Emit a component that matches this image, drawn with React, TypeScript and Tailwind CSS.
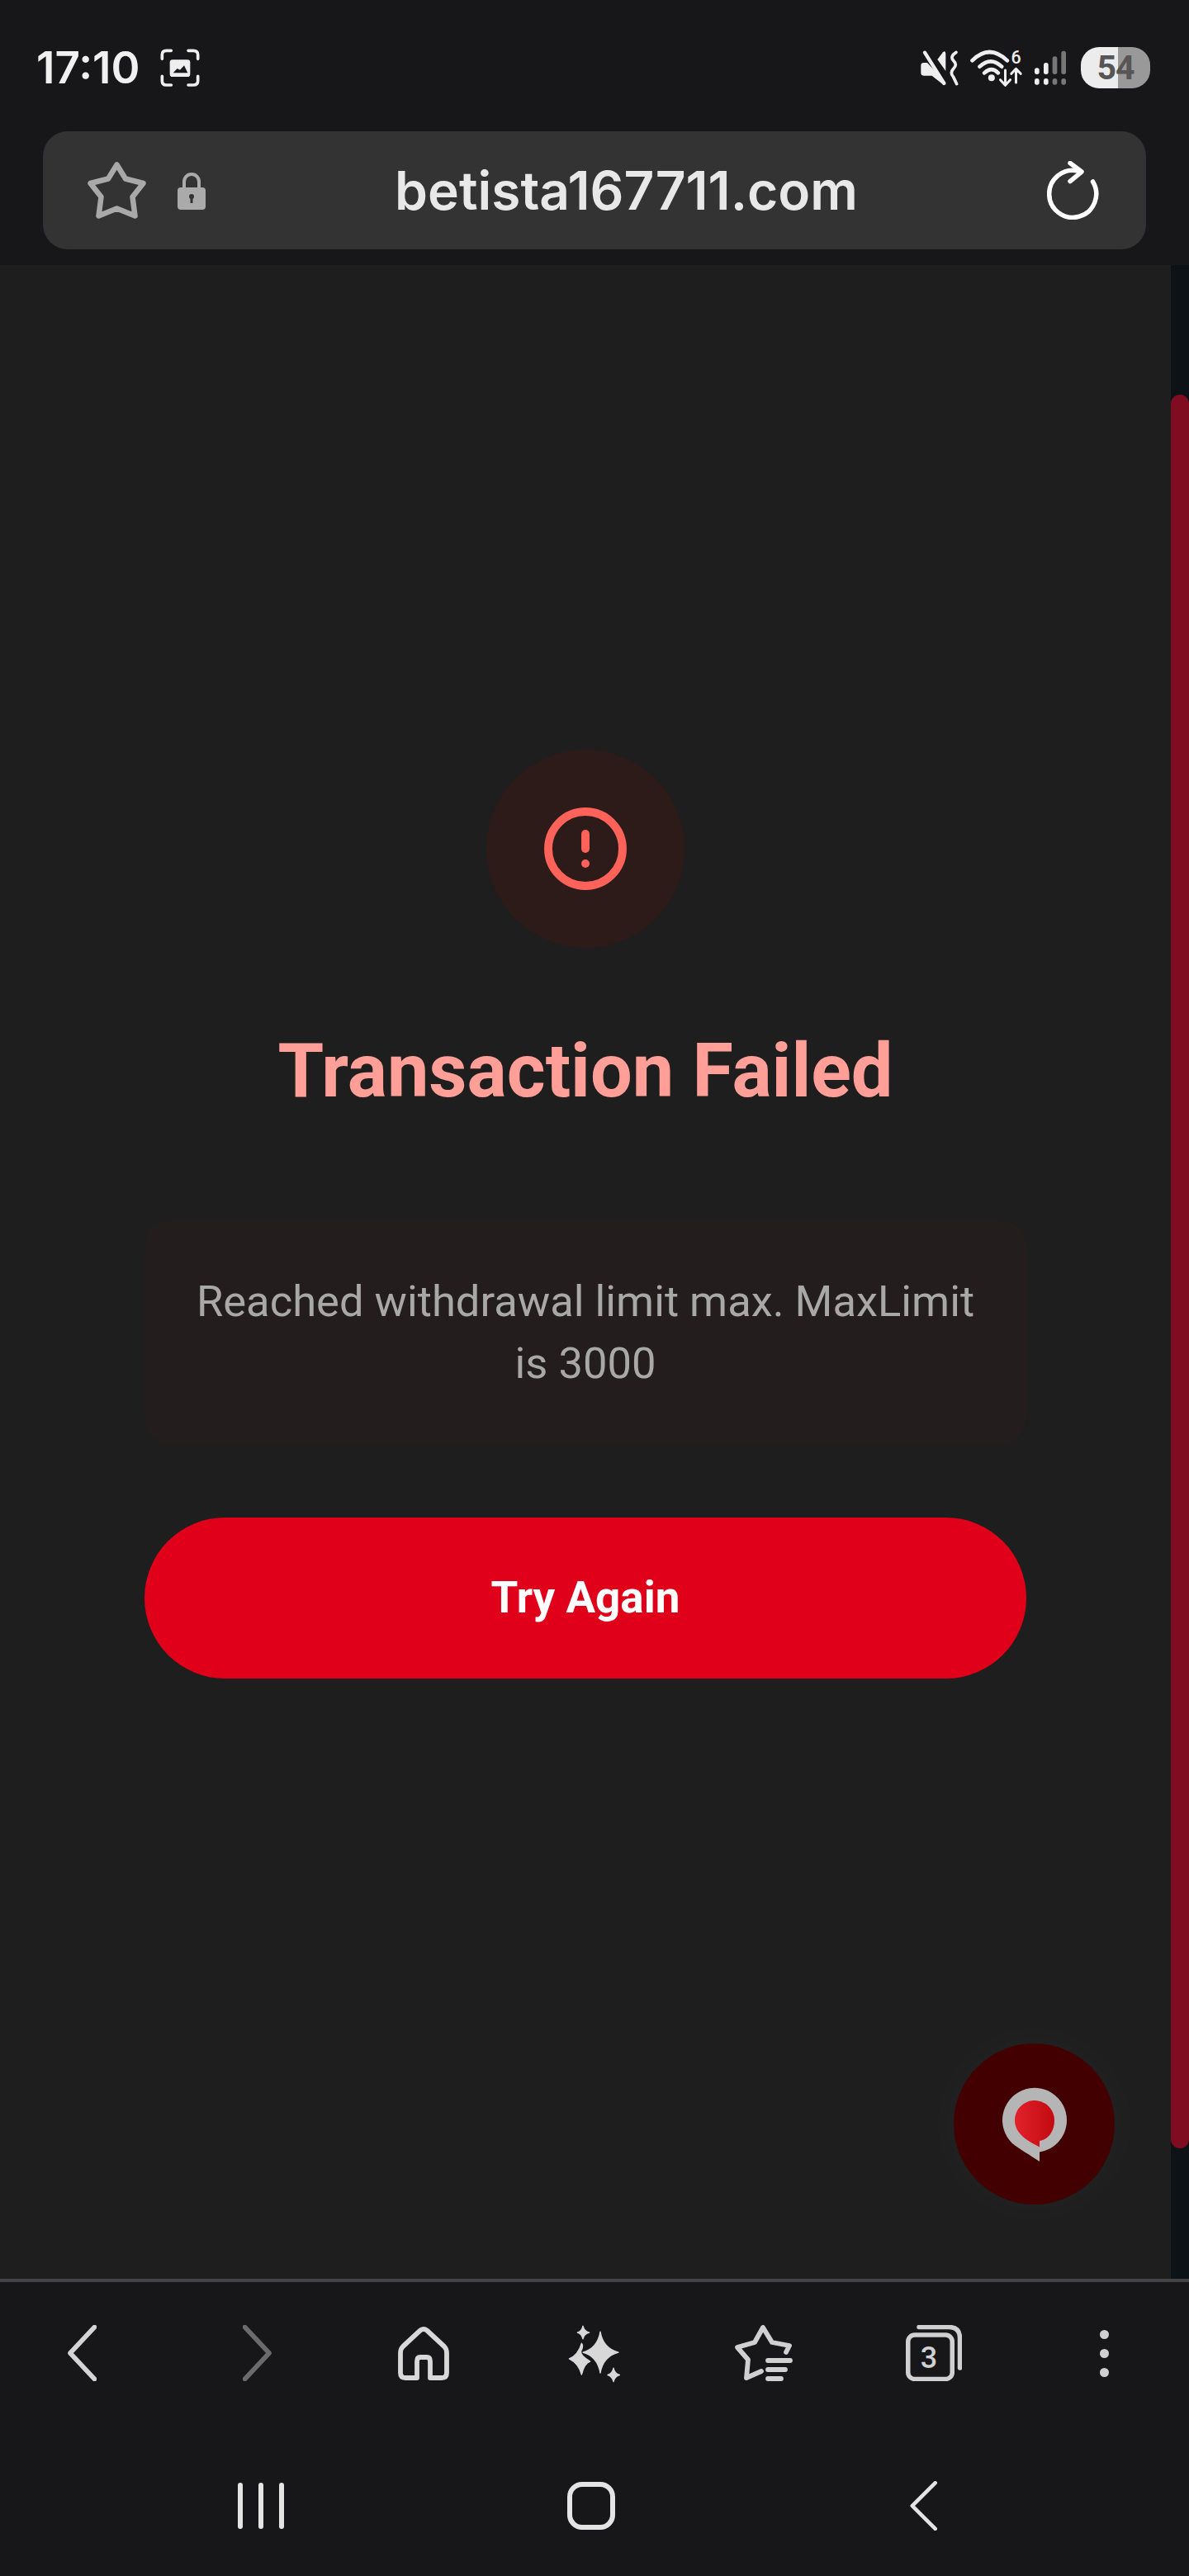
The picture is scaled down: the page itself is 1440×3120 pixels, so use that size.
import { AlertCircle } from "lucide-react";

function ScreenshotIcon() {
  return (
    <svg width="50" height="50" viewBox="35 22 150 150" fill="none" className="ml-[24px]">
      <path d="M45 65V50Q45 35 60 35H78M140 35H158Q175 35 175 50V65M175 128V145Q175 160 158 160H140M78 160H60Q45 160 45 145V128" stroke="#eee" strokeWidth="11" strokeLinecap="round" />
      <rect x="73" y="68" width="74" height="62" rx="10" fill="#eee" />
      <path d="M85 116L100 100L110 105L125 89L138 116Z" fill="#17171a" />
    </svg>
  );
}

function MuteIcon() {
  return (
    <svg width="50" height="45" viewBox="25 30 150 135" fill="none">
      <path d="M32 88Q32 78 42 78H55L122 150V152Q118 162 110 155L72 125H42Q32 125 32 115Z" fill="#eee" />
      <path d="M92 66L112 40Q120 32 122 44V108Z" fill="#eee" />
      <path d="M46 41L116 153" stroke="#eee" strokeWidth="13" strokeLinecap="round" />
      <path d="M160 40Q136 55 150 70Q166 85 150 100Q136 115 150 130Q156 142 162 155" stroke="#eee" strokeWidth="11" strokeLinecap="round" />
    </svg>
  );
}

function WifiIcon() {
  return (
    <svg width="67" height="55" viewBox="205 15 200 165" fill="none" className="ml-[10px]">
      <path d="M218 70Q280 8 345 70M245 92Q285 54 325 92M262 115Q288 90 312 115" stroke="#eee" strokeWidth="14" strokeLinecap="round" />
      <circle cx="288" cy="133" r="12" fill="#eee" />
      <path d="M338 105V158M320 140L338 160L356 140M377 150V100M360 118L377 100L394 118" stroke="#eee" strokeWidth="9" strokeLinecap="round" strokeLinejoin="round" />
      <text x="377" y="80" textAnchor="middle" fontSize="64" fontWeight="500" fill="#eee" fontFamily="Roboto, sans-serif">6</text>
    </svg>
  );
}

function SignalIcon() {
  return (
    <svg width="40" height="44" viewBox="440 30 120 132" fill="none" className="ml-[12px]">
      <rect x="443" y="97" width="17" height="23" rx="8" fill="#eee" />
      <rect x="476" y="78" width="17" height="42" rx="8" fill="#eee" />
      <rect x="508" y="55" width="17" height="65" rx="8" fill="#777" />
      <rect x="540" y="35" width="17" height="85" rx="8" fill="#777" />
      <rect x="443" y="135" width="17" height="23" rx="8" fill="#eee" />
      <rect x="476" y="135" width="17" height="23" rx="8" fill="#eee" />
      <rect x="508" y="135" width="17" height="23" rx="8" fill="#777" />
      <rect x="540" y="135" width="17" height="23" rx="8" fill="#777" />
    </svg>
  );
}

function Battery() {
  return (
    <div className="ml-[17px] flex h-[50px] w-[84px] items-center justify-center overflow-hidden rounded-[22px] bg-[linear-gradient(90deg,#ececec_0,#ececec_45px,#999999_45px,#999999_100%)]">
      <span className="text-[41px] leading-none font-bold tracking-[-1px] text-[#565656] [font-family:Roboto,sans-serif]">54</span>
    </div>
  );
}

function StarOutline() {
  return (
    <svg width="71" height="69" viewBox="0 0 71 69" fill="none">
      <path d="M35.500 3.500L46 20.500L67.500 26L54.500 42.500L57.500 65.500L35.500 56.500L13.500 65.500L16.500 42.500L3.500 26L25 20.500Z" stroke="#a9a9a9" strokeWidth="6.500" strokeLinejoin="round" />
    </svg>
  );
}

function LockIcon() {
  return (
    <svg width="34" height="46" viewBox="0 0 34 46" fill="none" className="ml-[38px]">
      <path d="M8 21V12a9 9 0 0 1 18 0v9" stroke="#aaa" strokeWidth="4" />
      <rect x="0" y="19" width="34" height="27" rx="4" fill="#aaa" />
      <circle cx="17" cy="30" r="3" fill="#333" />
      <rect x="15.5" y="30" width="3" height="8" fill="#333" />
    </svg>
  );
}

function ReloadIcon() {
  return (
    <svg width="63" height="71" viewBox="0 0 63 71" fill="none">
      <path d="M38 12.200A28.500 28.500 0 1 0 55.500 25" stroke="#fff" strokeWidth="5.500" strokeLinecap="round" />
      <path d="M28 2.500L42 13L28 24.500" stroke="#fff" strokeWidth="5.500" strokeLinecap="round" strokeLinejoin="round" />
    </svg>
  );
}

function Chevron({ dir, color, width = 5.6, className }: { dir: "left" | "right"; color: string; width?: number; className?: string }) {
  return (
    <svg width="35" height="68" viewBox="0 0 35 68" fill="none" preserveAspectRatio="none" className={className}>
      <path d={dir === "left" ? "M32.500 2.500L3 34L32.500 65.500" : "M2.500 2.500L32 34L2.500 65.500"} stroke={color} strokeWidth={width} strokeLinecap="round" strokeLinejoin="round" />
    </svg>
  );
}

function HomeIcon() {
  return (
    <svg width="62" height="65" viewBox="0 0 62 65" fill="none" className="ml-[153px]">
      <path d="M3 32Q3 27 6 24L27 4.500Q31 1.500 35 4.500L56 24Q59 27 59 32V56Q59 62 53 62H39V42Q39 37 35 37H27Q23 37 23 42V62H9Q3 62 3 56Z" stroke="#d8d8d8" strokeWidth="5.800" strokeLinejoin="round" />
    </svg>
  );
}

function SparklesIcon() {
  return (
    <svg width="65" height="72" viewBox="50 40 195 215" fill="#d8d8d8" stroke="#d8d8d8" strokeWidth="4" strokeLinejoin="round" className="ml-[143px]">
      <path d="M107 49Q111 68 130 73Q111 78 107 96Q103 78 87 73Q103 68 107 49Z" />
      <path d="M170 70Q180 130 236 145Q180 160 170 220Q160 160 107 145Q160 130 170 70Z" />
      <path d="M102 112Q110 122 100 140Q95 154 133 178Q112 185 102 226Q92 185 57 168Q90 155 102 112Z" />
      <path d="M218 202Q222 222 240 227Q222 232 218 251Q214 232 197 227Q214 222 218 202Z" />
    </svg>
  );
}

function BookmarksIcon() {
  return (
    <svg width="71" height="68" viewBox="0 0 71 68" fill="none" className="ml-[137px]">
      <path d="M63 33L67 25L46 21L35 3L25 21L4 27L17 42L15 64L33 56" stroke="#d0d0d0" strokeWidth="5.800" strokeLinecap="round" strokeLinejoin="round" />
      <path d="M41 43H68M41 54H62M41 65H57" stroke="#d0d0d0" strokeWidth="5.800" strokeLinecap="round" />
    </svg>
  );
}

function TabsIcon() {
  return (
    <svg width="68" height="68" viewBox="0 0 68 68" fill="none" className="ml-[137px]">
      <path d="M16 2.500H52Q65.500 2.500 65.500 16V52" stroke="#d0d0d0" strokeWidth="5.500" strokeLinecap="round" />
      <rect x="2.750" y="12" width="53.500" height="53.500" rx="8" stroke="#d0d0d0" strokeWidth="5.500" />
      <text x="28" y="52" textAnchor="middle" fontSize="36" fontWeight="500" fill="#d0d0d0" fontFamily="Roboto, sans-serif">3</text>
    </svg>
  );
}

function ChatBubble() {
  return (
    <svg width="80" height="90" viewBox="0 0 80 90" fill="none">
      <defs>
        <linearGradient id="bubbleRed" x1="0" x2="1" y1="0" y2="0">
          <stop offset="0" stopColor="#e2222c" />
          <stop offset="1" stopColor="#c20a10" />
        </linearGradient>
      </defs>
      <path d="M46 78.500C64 76 79 60 79 40A39 39 0 1 0 13 68C22 75 34 82 46 90Z" fill="#b5b5b5" />
      <path d="M46 72.500V65C58 63 64 52 64 40A24 24 0 1 0 23 57C29 64 38 68 46 72.500Z" fill="url(#bubbleRed)" />
    </svg>
  );
}

export default function App() {
  return (
    <div className="flex h-[3120px] w-[1440px] flex-col overflow-hidden bg-[#17171a] [font-family:Roboto,sans-serif]">
      <header className="h-[321px] shrink-0">
        <div className="flex h-[159px] items-start justify-between pt-[57px] pr-[47px] pl-[44px]">
          <div className="flex h-[50px] items-center">
            <span className="text-[53px] leading-[50px] font-semibold text-[#f0f0f0] [font-family:Inter,sans-serif]">17:10</span>
            <ScreenshotIcon />
          </div>
          <div className="flex h-[50px] items-center">
            <MuteIcon />
            <WifiIcon />
            <SignalIcon />
            <Battery />
          </div>
        </div>
        <div className="mx-[52px] flex h-[143px] items-center rounded-[30px] bg-[#333333] pr-[57px] pl-[54px]">
          <StarOutline />
          <LockIcon />
          <span className="flex-1 text-center text-[64px] leading-none font-semibold text-[#e8e8e8] [font-family:Inter,sans-serif]">betista167711.com</span>
          <ReloadIcon />
        </div>
      </header>

      <div className="flex h-[2439px] shrink-0">
        <main className="relative w-[1418px] bg-[#1e1e1e] px-[175px] pt-[587px]">
          <div className="mx-auto flex h-[240px] w-[240px] items-center justify-center rounded-full bg-[#2d1b1a]">
            <AlertCircle size={108} color="#ff6259" strokeWidth={2.2} />
          </div>
          <h1 className="mt-[98px] text-center text-[90px] leading-[104px] font-bold text-[#ff9f97]">Transaction Failed</h1>
          <div className="mt-[128px] flex h-[272px] items-center justify-center rounded-[32px] bg-[#231d1d] px-[60px] text-center text-[52.500px] leading-[75px] text-[#a8a8a8]">
            Reached withdrawal limit max. MaxLimit is 3000
          </div>
          <button type="button" className="mt-[88px] h-[195px] w-full rounded-full bg-[#e0001a] text-[53px] font-bold text-white">
            Try Again
          </button>
          <div className="absolute top-[2154px] left-[1155px] flex h-[195px] w-[195px] items-center justify-center rounded-full bg-[#420000] shadow-[0_0_70px_rgba(255,255,255,0.03)]">
            <ChatBubble />
          </div>
        </main>
        <div className="w-[22px] bg-[#0d1216] pt-[157px]">
          <div className="h-[2124px] rounded-full bg-[#7f0c20]" />
        </div>
      </div>

      <footer className="flex-1 border-t-4 border-[#444444]">
        <div className="flex h-[243px] pt-[52px] pl-[82px]">
          <div className="flex h-[68px] items-center">
            <Chevron dir="left" color="#d4d4d4" />
            <Chevron dir="right" color="#6b6b6b" className="ml-[177px]" />
            <HomeIcon />
            <SparklesIcon />
            <BookmarksIcon />
            <TabsIcon />
            <div className="ml-[167px] flex flex-col items-center gap-[12px]">
              <span className="h-[11px] w-[11px] rounded-full bg-[#d0d0d0]" />
              <span className="h-[11px] w-[11px] rounded-full bg-[#d0d0d0]" />
              <span className="h-[11px] w-[11px] rounded-full bg-[#d0d0d0]" />
            </div>
          </div>
        </div>
        <div className="flex items-start pl-[288px]">
          <div className="flex h-[56px] gap-[19px]">
            <span className="w-[6px] rounded-full bg-[#e4e4e4]" />
            <span className="w-[6px] rounded-full bg-[#e4e4e4]" />
            <span className="w-[6px] rounded-full bg-[#e4e4e4]" />
          </div>
          <div className="mt-[-1px] ml-[343px] h-[58px] w-[58px] rounded-[18px] border-[6px] border-[#e4e4e4]" />
          <Chevron dir="left" color="#e4e4e4" width={5} className="mt-[-2px] ml-[357px] h-[60px] w-[33px]" />
        </div>
      </footer>
    </div>
  );
}
